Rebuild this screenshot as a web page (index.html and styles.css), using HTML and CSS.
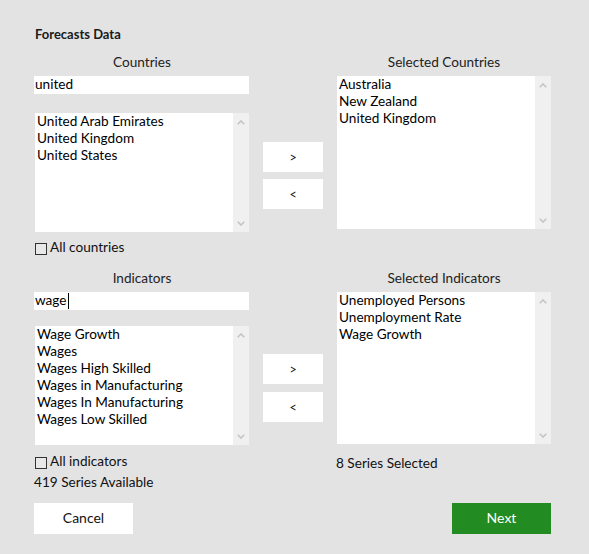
FILE: index.html
```html
<!DOCTYPE html>
<html>
<head>
<meta charset="utf-8">
<link rel="stylesheet" href="styles.css">
</head>
<body>
<div class="page">
  <div class="title">Forecasts Data</div>

  <section class="picker picker-countries">
    <div class="col">
      <div class="label">Countries</div>
      <div class="input">united</div>
      <div class="list list-src">
        <div class="items">
          <div>United Arab Emirates</div>
          <div>United Kingdom</div>
          <div>United States</div>
        </div>
        <div class="scrollbar">
          <svg class="chev" width="8" height="5" viewBox="0 0 8 5"><path d="M0.7 4.3 L4 1 L7.3 4.3" fill="none" stroke="#c4c4c4" stroke-width="1.6"/></svg>
          <svg class="chev" width="8" height="5" viewBox="0 0 8 5"><path d="M0.7 0.7 L4 4 L7.3 0.7" fill="none" stroke="#c4c4c4" stroke-width="1.6"/></svg>
        </div>
      </div>
      <div class="check"><span class="box"></span><span>All countries</span></div>
    </div>
    <div class="col mid">
      <div class="btn-move">&gt;</div>
      <div class="btn-move">&lt;</div>
    </div>
    <div class="col">
      <div class="label">Selected Countries</div>
      <div class="list list-dst">
        <div class="items">
          <div>Australia</div>
          <div>New Zealand</div>
          <div>United Kingdom</div>
        </div>
        <div class="scrollbar">
          <svg class="chev" width="8" height="5" viewBox="0 0 8 5"><path d="M0.7 4.3 L4 1 L7.3 4.3" fill="none" stroke="#c4c4c4" stroke-width="1.6"/></svg>
          <svg class="chev" width="8" height="5" viewBox="0 0 8 5"><path d="M0.7 0.7 L4 4 L7.3 0.7" fill="none" stroke="#c4c4c4" stroke-width="1.6"/></svg>
        </div>
      </div>
    </div>
  </section>

  <section class="picker picker-indicators">
    <div class="col">
      <div class="label">Indicators</div>
      <div class="input">wage<span class="caret"></span></div>
      <div class="list list-src2">
        <div class="items">
          <div>Wage Growth</div>
          <div>Wages</div>
          <div>Wages High Skilled</div>
          <div>Wages in Manufacturing</div>
          <div>Wages In Manufacturing</div>
          <div>Wages Low Skilled</div>
        </div>
        <div class="scrollbar">
          <svg class="chev" width="8" height="5" viewBox="0 0 8 5"><path d="M0.7 4.3 L4 1 L7.3 4.3" fill="none" stroke="#c4c4c4" stroke-width="1.6"/></svg>
          <svg class="chev" width="8" height="5" viewBox="0 0 8 5"><path d="M0.7 0.7 L4 4 L7.3 0.7" fill="none" stroke="#c4c4c4" stroke-width="1.6"/></svg>
        </div>
      </div>
      <div class="check check2"><span class="box"></span><span>All indicators</span></div>
      <div class="status">419 Series Available</div>
    </div>
    <div class="col mid mid2">
      <div class="btn-move">&gt;</div>
      <div class="btn-move">&lt;</div>
    </div>
    <div class="col">
      <div class="label">Selected Indicators</div>
      <div class="list list-dst2">
        <div class="items">
          <div>Unemployed Persons</div>
          <div>Unemployment Rate</div>
          <div>Wage Growth</div>
        </div>
        <div class="scrollbar">
          <svg class="chev" width="8" height="5" viewBox="0 0 8 5"><path d="M0.7 4.3 L4 1 L7.3 4.3" fill="none" stroke="#c4c4c4" stroke-width="1.6"/></svg>
          <svg class="chev" width="8" height="5" viewBox="0 0 8 5"><path d="M0.7 0.7 L4 4 L7.3 0.7" fill="none" stroke="#c4c4c4" stroke-width="1.6"/></svg>
        </div>
      </div>
      <div class="status status-right">8 Series Selected</div>
    </div>
  </section>

  <div class="footer">
    <div class="btn btn-cancel">Cancel</div>
    <div class="btn btn-next">Next</div>
  </div>
</div>
</body>
</html>
```

FILE: styles.css
```css
html, body {
  margin: 0;
  padding: 0;
  background: #e3e3e3;
}
body {
  font-family: Lato, "Liberation Sans", sans-serif;
  font-size: 13.6px;
  line-height: 17px;
  color: #111;
  width: 589px;
  height: 554px;
  overflow: hidden;
}
.page {
  padding: 26px 0 0 35px;
}
.title {
  font-size: 13px;
  font-weight: 700;
  color: #1a1a1a;
  height: 17px;
}
.picker {
  display: grid;
  grid-template-columns: 214px 60px 214px;
  column-gap: 14px;
  align-items: start;
}
.picker-countries {
  margin-top: 11px;
}
.picker-indicators {
  margin-top: 14px;
}
.col {
  display: flex;
  flex-direction: column;
}
.label {
  text-align: center;
  color: #222;
  height: 17px;
  margin-bottom: 5px;
}
.input {
  background: #fff;
  height: 18px;
  box-sizing: border-box;
  padding: 0 0 1px 1px;
  margin-left: -1px;
  color: #000;
  display: flex;
  align-items: center;
}
.caret {
  display: inline-block;
  width: 1px;
  height: 16px;
  background: #000;
  margin-left: 1px;
}
.list {
  background: #fff;
  display: flex;
}
.list .items {
  flex: 1;
  padding-left: 2px;
  color: #000;
}
.list-src {
  margin-top: 19px;
  height: 119px;
}
.list-src2 {
  margin-top: 16px;
  height: 119px;
}
.list-dst {
  height: 153px;
}
.list-dst2 {
  height: 152px;
}
.scrollbar {
  width: 16px;
  background: #f0f0f0;
  display: flex;
  flex-direction: column;
  justify-content: space-between;
  align-items: center;
  padding: 7px 0 6px;
  box-sizing: border-box;
}
.chev {
  display: block;
}
.check {
  display: flex;
  align-items: flex-start;
  margin-top: 7px;
  height: 17px;
  color: #111;
}
.check2 {
  margin-top: 8px;
}
.box {
  width: 10px;
  height: 10px;
  border: 1px solid #333;
  background: #e8e8e8;
  margin: 4px 3px 0 0;
}
.status {
  margin-top: 4px;
  height: 17px;
  margin-left: -1px;
}
.status-right {
  margin-top: 11px;
}
.mid {
  padding-top: 88px;
  gap: 7px;
}
.mid2 {
  padding-top: 84px;
  gap: 8px;
}
.btn-move {
  background: #fff;
  height: 30px;
  display: flex;
  align-items: center;
  justify-content: center;
  font-size: 12.5px;
  color: #111;
}
.footer {
  display: flex;
  justify-content: space-between;
  width: 517px;
  margin-left: -1px;
  margin-top: 12px;
}
.btn {
  width: 99px;
  height: 31px;
  box-sizing: border-box;
  padding-bottom: 2px;
  display: flex;
  align-items: center;
  justify-content: center;
  font-size: 14px;
}
.btn-cancel {
  background: #fff;
  color: #111;
}
.btn-next {
  background: #228b22;
  color: #fff;
}
```
